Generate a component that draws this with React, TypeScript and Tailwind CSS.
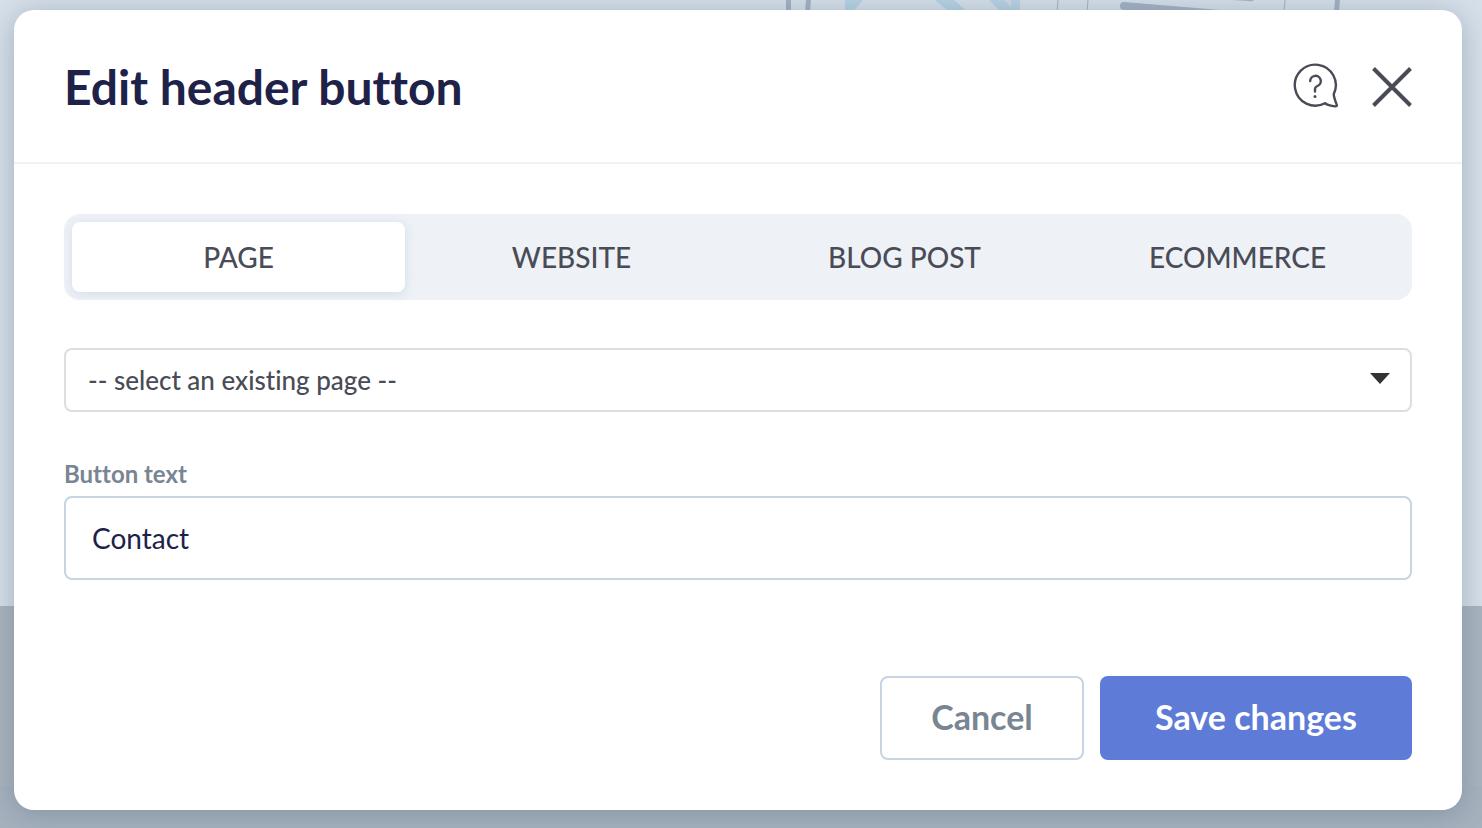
import { useState } from "react";

const TABS = ["PAGE", "WEBSITE", "BLOG POST", "ECOMMERCE"];

function Backdrop() {
  return (
    <div aria-hidden="true" className="absolute inset-0 flex flex-col overflow-hidden">
      <div className="h-[606px] shrink-0 bg-[#d6e0ea]">
        <svg className="block w-full" height="12" viewBox="0 0 1482 12">
          <path d="M845 0h18l-10 12h-8zM935 0h19l14 12h-19zM989 0h31v12h-19z" fill="#b8d3e5" />
          <path d="M1004 0h7v7z" fill="#d0dae4" />
          <g fill="#a3b1c4">
            <path d="M786 0h5v12h-5zM806 0h5l-1 12h-5z" />
            <path d="M1124 2q-4 0-4 4t4 4l80 2h40z" />
            <path d="M1232 0h22q-2 2-6 1z" />
            <path d="M1335 0h5l-1 12h-5z" />
          </g>
          <path d="M1058 0l-1 12M1088 0l-1 12M1285 0l-1 12" stroke="#a3b1c4" strokeWidth="1" />
        </svg>
      </div>
      <div className="h-[180px] shrink-0 bg-[#a9b4bf]" />
      <div className="grow bg-[#a6b2be]" />
    </div>
  );
}

function HelpIcon() {
  return (
    <svg width="48" height="48" viewBox="0 1 48 48" fill="none" stroke="#494c56" strokeWidth="2.4" strokeLinecap="round" strokeLinejoin="round">
      <path d="M33 41.200A20.500 20.500 0 1 1 41.700 32.200Q42 36 44.700 42.600Q45.300 44.600 43.200 44.400Q36 43.500 33 41.200" />
      <path d="M18.200 19a5.300 5.300 0 1 1 7.300 5q-2.500 1-2.500 3v2.500" />
      <circle cx="23" cy="34.500" r="1.500" fill="#494c56" stroke="none" />
    </svg>
  );
}

export default function App() {
  const [tab, setTab] = useState("PAGE");
  const [text, setText] = useState("Contact");

  return (
    <div className="relative min-h-screen pt-[10px] pr-5 pb-[18px] pl-[14px] font-['Lato',sans-serif] [font-variant-ligatures:none]">
      <Backdrop />
      <section
        role="dialog"
        aria-labelledby="dialog-title"
        className="relative rounded-[20px] bg-white shadow-[0_4px_30px_rgba(80,100,120,0.4)]"
      >
        <header className="flex h-[154px] items-center justify-between border-b-2 border-[#eef2f6] px-[50px] pt-0.5">
          <h1 id="dialog-title" className="text-5xl leading-[56px] font-bold text-[#1e2248]">
            Edit header button
          </h1>
          <div className="flex items-center gap-8">
            <button type="button" aria-label="Help">
              <HelpIcon />
            </button>
            <button type="button" aria-label="Close">
              <svg width="40" height="40" viewBox="0 0 40 40" stroke="#494c56" strokeWidth="4">
                <path d="M1.500 1.500l37 37M38.500 1.500l-37 37" />
              </svg>
            </button>
          </div>
        </header>

        <form className="flex flex-col p-[50px]" onSubmit={(e) => e.preventDefault()}>
          <div role="tablist" className="grid grid-cols-4 rounded-2xl bg-[#eef1f6] p-2">
            {TABS.map((name) => (
              <button
                key={name}
                type="button"
                role="tab"
                aria-selected={tab === name}
                onClick={() => setTab(name)}
                className={`h-[70px] rounded-lg text-[28px] font-medium text-[#494c56] ${
                  tab === name ? "bg-white shadow-[0_2px_10px_rgba(190,210,225,0.6)]" : ""
                }`}
              >
                {name}
              </button>
            ))}
          </div>

          <div className="relative mt-12">
            <select
              aria-label="Page"
              className="h-16 w-full appearance-none rounded-lg border-2 border-[#dedede] bg-white px-[22px] text-[26px] font-medium text-[#494c56]"
            >
              <option>-- select an existing page --</option>
            </select>
            <svg className="pointer-events-none absolute top-[25px] right-[22px]" width="20" height="11" viewBox="0 0 20 11">
              <path d="M0 0h20L10 11z" fill="#333" />
            </svg>
          </div>

          <label htmlFor="button-text" className="mt-[46px] text-2xl leading-8 font-bold text-[#788592]">
            Button text
          </label>
          <input
            id="button-text"
            type="text"
            value={text}
            onChange={(e) => setText(e.target.value)}
            className="mt-[6px] h-[84px] rounded-lg border-2 border-[#c7d5e3] bg-white px-[26px] text-[28px] text-[#1e2248]"
          />

          <div className="mt-24 flex justify-end gap-4 text-[34px] font-bold">
            <button
              type="button"
              className="h-[84px] w-[204px] rounded-lg border-2 border-[#c7d5e3] bg-white pb-1 text-[#788592]"
            >
              Cancel
            </button>
            <button type="submit" className="h-[84px] w-[312px] rounded-lg bg-[#5d7bd7] pb-1 text-white">
              Save changes
            </button>
          </div>
        </form>
      </section>
    </div>
  );
}
